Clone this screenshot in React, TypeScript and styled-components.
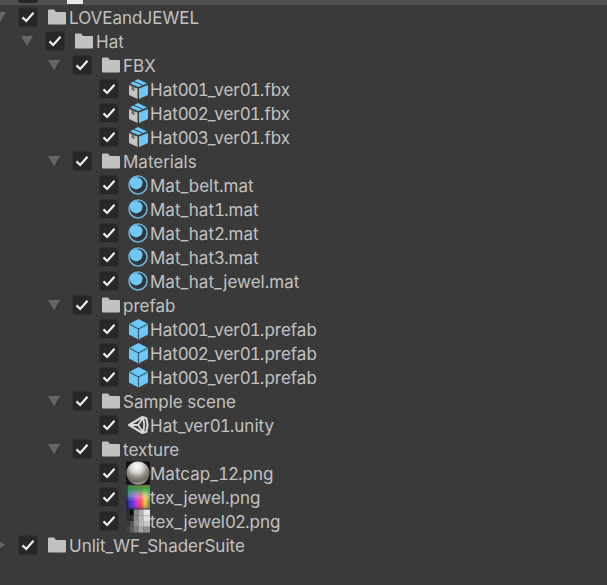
import React from "react";
import styled, { createGlobalStyle } from "styled-components";

const Global = createGlobalStyle`
  html, body { margin: 0; padding: 0; background: #3a3a3a; overflow: hidden; }
  body { font-family: Inter, "Noto Sans", sans-serif; }
`;
const Tree = styled.div`
  width: 607px;
  height: 585px;
  overflow: hidden;
  background: #3a3a3a;
  display: flex;
  flex-direction: column;
`;
const TopStrip = styled.div`
  height: 5px;
  flex: none;
  background: #4f4f4f;
  overflow: hidden;
  display: flex;
  align-items: flex-end;
`;
const Row = styled.div<{ $level: number }>`
  height: 24px;
  flex: none;
  display: flex;
  align-items: center;
  margin-left: ${p => p.$level * 27 - 9}px;
`;
const ArrowCell = styled.div`
  width: 18px;
  margin-right: 9px;
  flex: none;
  display: flex;
  justify-content: center;
  align-items: center;
`;
const Check = styled.div`
  width: 20px;
  height: 20px;
  flex: none;
  box-sizing: border-box;
  border-radius: 3px;
  background: #272727;
  border: 1px solid #313131;
  display: flex;
  align-items: center;
  justify-content: center;
`;
const IconCell = styled.div`
  width: 24px;
  height: 24px;
  margin-left: 7px;
  flex: none;
  display: flex;
  align-items: center;
  justify-content: center;
`;
const Label = styled.span`
  font-size: 17px;
  font-variant-numeric: tabular-nums;
  line-height: 24px;
  padding-top: 2px;
  color: #c2c2c2;
  white-space: nowrap;
`;
const Digits = styled.span`
  letter-spacing: -1px;
`;
const StripBlock = styled.div`
  width: 16px;
  height: 4px;
  margin: 0 0 1px 29px;
  background: #e8e8e8;
  flex: none;
`;
const StripCheck = styled.div`
  width: 20px;
  height: 3px;
  margin: 0 0 2px 18px;
  background: #272727;
  border-radius: 0 0 3px 3px;
  flex: none;
`;

const Tick = () => (
  <svg width="14" height="12" viewBox="0 0 14 12">
    <path d="M1.5 6.4 L5.2 10 L12.5 1.8" fill="none" stroke="#f0f0f0" strokeWidth="2.2" />
  </svg>
);
const ArrowDown = () => (
  <svg width="12" height="10" viewBox="0 0 12 10">
    <path d="M0 0 H12 L6 10 Z" fill="#666" />
  </svg>
);
const ArrowRight = () => (
  <svg width="10" height="12" viewBox="0 0 10 12">
    <path d="M0 0 V12 L10 6 Z" fill="#666" />
  </svg>
);
const Folder = () => (
  <svg width="18" height="16" viewBox="0 0 18 16">
    <path d="M0 1.5 Q0 .5 1 .5 H6 L8 3 H17 Q18 3 18 4 V14.5 Q18 15.5 17 15.5 H1 Q0 15.5 0 14.5 Z" fill="#c2c2c2" />
  </svg>
);
const ModelBox = () => (
  <svg width="21" height="22" viewBox="0 0 21 22">
    <path d="M1 7 L9.5 10.5 V21 L1 17 Z" fill="#c4c4c4" />
    <path d="M3.5 8 L6.5 9.3 V13 L3.5 11.8 Z" fill="#6e6e6e" />
    <path d="M11 10.5 L20 7 V17 L11 21 Z" fill="#6cc9f5" />
    <path d="M2 5.6 L10 1 L19 5.4 L10.3 9 Z" fill="#6cc9f5" />
    <path d="M6 3.5 L14.5 7" stroke="#3a3a3a" strokeWidth="1" />
  </svg>
);
const Prefab = () => (
  <svg width="21" height="22" viewBox="0 0 21 22">
    <path d="M10.5 1 L20 6 V16.5 L10.5 21.5 L1 16.5 V6 Z" fill="#6cc9f5" />
    <path d="M1.5 6.2 L10.5 11 L19.5 6.2 M10.5 11 V21" fill="none" stroke="#35566a" strokeWidth="1.1" />
  </svg>
);
const Material = () => (
  <svg width="22" height="22" viewBox="0 0 22 22">
    <circle cx="11" cy="11" r="9" fill="#2f3538" stroke="#6fb6d6" strokeWidth="1.5" />
    <circle cx="9.2" cy="9.2" r="6.2" fill="#6cc9f5" />
    <path d="M12.5 3.8 A6.8 6.8 0 0 1 15.6 11 A7.6 7.6 0 0 0 12.5 3.8 Z" fill="#cfe8f4" />
  </svg>
);
const UnityLogo = () => (
  <svg width="22" height="22" viewBox="0 0 22 22">
    <path d="M2 11 L15.5 3 L19.3 4.2 L20.6 11 L19.3 17.8 L15.5 19 Z" fill="none" stroke="#d8d8d8" strokeWidth="2.1" strokeLinejoin="round" />
    <path d="M3 11 H11 L16 4 M11 11 L16 18 M16 4 Q18.4 11 16 18" fill="none" stroke="#d8d8d8" strokeWidth="1.9" />
  </svg>
);
const Matcap = () => (
  <svg width="25" height="24" viewBox="0 0 25 24">
    <defs>
      <radialGradient id="mc" cx="0.45" cy="0.22" r="0.85">
        <stop offset="0" stopColor="#ffffff" />
        <stop offset="0.3" stopColor="#d8d8d4" />
        <stop offset="0.58" stopColor="#8a877c" />
        <stop offset="0.78" stopColor="#6a675c" />
        <stop offset="0.95" stopColor="#b8b6aa" />
        <stop offset="1" stopColor="#77746a" />
      </radialGradient>
    </defs>
    <rect width="25" height="24" fill="#141414" />
    <circle cx="12.5" cy="12" r="12" fill="url(#mc)" />
  </svg>
);
const Jewel = () => (
  <svg width="25" height="24" viewBox="0 0 25 24">
    <defs>
      <linearGradient id="jh" x1="0" x2="1" y1="0" y2="0">
        <stop offset="0" stopColor="#101a70" />
        <stop offset="0.25" stopColor="#3a28e0" />
        <stop offset="0.45" stopColor="#e020c0" />
        <stop offset="0.62" stopColor="#fa3c40" />
        <stop offset="0.8" stopColor="#f0c830" />
        <stop offset="1" stopColor="#4a8a30" />
      </linearGradient>
      <linearGradient id="jv" x1="0" x2="0" y1="0" y2="1">
        <stop offset="0" stopColor="#4f8a30" stopOpacity="1" />
        <stop offset="0.2" stopColor="#30b050" stopOpacity="0.8" />
        <stop offset="0.48" stopColor="#d0f0e8" stopOpacity="0.4" />
        <stop offset="0.72" stopColor="#ffffff" stopOpacity="0.05" />
        <stop offset="1" stopColor="#302060" stopOpacity="0.35" />
      </linearGradient>
    </defs>
    <rect width="25" height="24" fill="url(#jh)" />
    <rect width="25" height="24" fill="url(#jv)" />
    <rect width="2" height="24" fill="#1c1c1c" opacity="0.6" />
  </svg>
);
const Jewel2 = () => {
  const cols = [
    { w: 4, c: ["#303030", "#303030", "#3a3a3a", "#444444"] },
    { w: 4, c: ["#0c0c0c", "#2c2c2c", "#555555", "#5e5e5e"] },
    { w: 5, c: ["#8a8a8a", "#8a8a8a", "#909090", "#7e7e7e"] },
    { w: 5, c: ["#b0b0b0", "#b4b4b4", "#b8b8b8", "#a4a4a4"] },
    { w: 7, c: ["#e8e8e8", "#e0e0e0", "#c8c8c8", "#8e8e8e"] },
  ];
  let x = 0;
  return (
    <svg width="25" height="24" viewBox="0 0 25 24">
      <rect width="25" height="24" fill="#1c1c1c" />
      {cols.map((col, i) => {
        const left = x;
        x += col.w;
        return col.c.map((c, j) => (
          <rect key={`${i}-${j}`} x={left} y={j * 6} width={col.w + 0.1} height="6.1" fill={c} />
        ));
      })}
    </svg>
  );
};

type Kind = "folder" | "box" | "prefab" | "mat" | "unity" | "matcap" | "jewel" | "jewel2";
const icons: Record<Kind, React.ReactNode> = {
  folder: <Folder />,
  box: <ModelBox />,
  prefab: <Prefab />,
  mat: <Material />,
  unity: <UnityLogo />,
  matcap: <Matcap />,
  jewel: <Jewel />,
  jewel2: <Jewel2 />,
};

type Item = { level: number; icon: Kind; label: string; arrow?: "down" | "right" };
const items: Item[] = [
  { level: 0, icon: "folder", label: "LOVEandJEWEL", arrow: "down" },
  { level: 1, icon: "folder", label: "Hat", arrow: "down" },
  { level: 2, icon: "folder", label: "FBX", arrow: "down" },
  { level: 3, icon: "box", label: "Hat001_ver01.fbx" },
  { level: 3, icon: "box", label: "Hat002_ver01.fbx" },
  { level: 3, icon: "box", label: "Hat003_ver01.fbx" },
  { level: 2, icon: "folder", label: "Materials", arrow: "down" },
  { level: 3, icon: "mat", label: "Mat_belt.mat" },
  { level: 3, icon: "mat", label: "Mat_hat1.mat" },
  { level: 3, icon: "mat", label: "Mat_hat2.mat" },
  { level: 3, icon: "mat", label: "Mat_hat3.mat" },
  { level: 3, icon: "mat", label: "Mat_hat_jewel.mat" },
  { level: 2, icon: "folder", label: "prefab", arrow: "down" },
  { level: 3, icon: "prefab", label: "Hat001_ver01.prefab" },
  { level: 3, icon: "prefab", label: "Hat002_ver01.prefab" },
  { level: 3, icon: "prefab", label: "Hat003_ver01.prefab" },
  { level: 2, icon: "folder", label: "Sample scene", arrow: "down" },
  { level: 3, icon: "unity", label: "Hat_ver01.unity" },
  { level: 2, icon: "folder", label: "texture", arrow: "down" },
  { level: 3, icon: "matcap", label: "Matcap_12.png" },
  { level: 3, icon: "jewel", label: "tex_jewel.png" },
  { level: 3, icon: "jewel2", label: "tex_jewel02.png" },
  { level: 0, icon: "folder", label: "Unlit_WF_ShaderSuite", arrow: "right" },
];

const renderLabel = (text: string) =>
  text.split(/(\d+)/).map((part, i) => (i % 2 === 1 ? <Digits key={i}>{part}</Digits> : part));

export default function App() {
  return (
    <Tree>
      <Global />
      <TopStrip>
        <StripCheck />
        <StripBlock />
      </TopStrip>
      {items.map(it => (
        <Row key={it.label} $level={it.level}>
          <ArrowCell>
            {it.arrow === "down" && <ArrowDown />}
            {it.arrow === "right" && <ArrowRight />}
          </ArrowCell>
          <Check>
            <Tick />
          </Check>
          <IconCell>{icons[it.icon]}</IconCell>
          <Label>{renderLabel(it.label)}</Label>
        </Row>
      ))}
    </Tree>
  );
}
